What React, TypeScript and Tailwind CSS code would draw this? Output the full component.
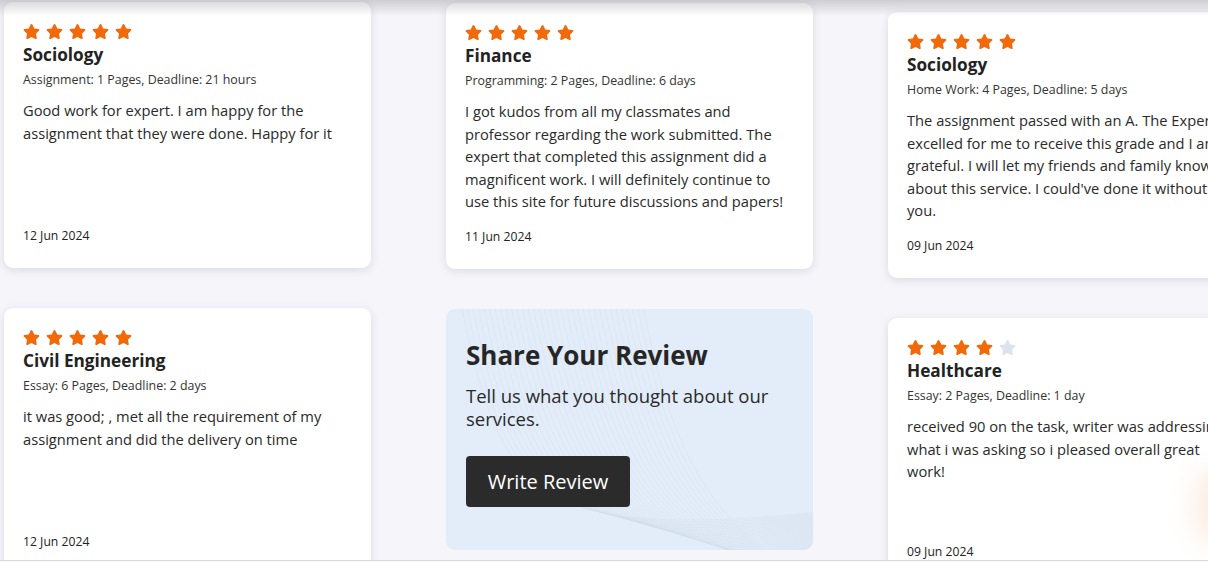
import React from "react";
import { FaStar } from "react-icons/fa";

type Review = {
  stars: number;
  title: string;
  meta: string;
  lines: string[];
  date: string;
};

const col1: Review[] = [
  {
    stars: 5,
    title: "Sociology",
    meta: "Assignment: 1 Pages, Deadline: 21 hours",
    lines: ["Good work for expert. I am happy for the", "assignment that they were done. Happy for it"],
    date: "12 Jun 2024",
  },
  {
    stars: 5,
    title: "Civil Engineering",
    meta: "Essay: 6 Pages, Deadline: 2 days",
    lines: ["it was good; , met all the requirement of my", "assignment and did the delivery on time"],
    date: "12 Jun 2024",
  },
];

const finance: Review = {
  stars: 5,
  title: "Finance",
  meta: "Programming: 2 Pages, Deadline: 6 days",
  lines: [
    "I got kudos from all my classmates and",
    "professor regarding the work submitted. The",
    "expert that completed this assignment did a",
    "magnificent work. I will definitely continue to",
    "use this site for future discussions and papers!",
  ],
  date: "11 Jun 2024",
};

const col3: Review[] = [
  {
    stars: 5,
    title: "Sociology",
    meta: "Home Work: 4 Pages, Deadline: 5 days",
    lines: [
      "The assignment passed with an A. The Expert",
      "excelled for me to receive this grade and I am",
      "grateful. I will let my friends and family know",
      "about this service. I could've done it without",
      "you.",
    ],
    date: "09 Jun 2024",
  },
  {
    stars: 4,
    title: "Healthcare",
    meta: "Essay: 2 Pages, Deadline: 1 day",
    lines: [
      "received 90 on the task, writer was addressing",
      "what i was asking so i pleased overall great",
      "work!",
    ],
    date: "09 Jun 2024",
  },
];

function Stars({ n }: { n: number }) {
  return (
    <div className="flex items-center gap-[6px] h-[17px]">
      {[0, 1, 2, 3, 4].map((i) => (
        <FaStar
          key={i}
          size={17}
          className={i < n ? "text-[#f2690a]" : "text-[#dde3ec]"}
        />
      ))}
    </div>
  );
}

function Card({ r }: { r: Review }) {
  return (
    <div className="w-[367px] h-[266px] shrink-0 bg-white rounded-[9px] shadow-[0_2px_8px_rgba(40,40,80,0.13)] px-[19px] pt-[21px] pb-[23px] flex flex-col">
      <Stars n={r.stars} />
      <div className="text-[17.2px] leading-[24px] font-bold text-[#222222] mt-[3px]">{r.title}</div>
      <div className="text-[12.4px] leading-[18px] text-[#333333] mt-[4px] whitespace-nowrap">{r.meta}</div>
      <div className="text-[14.7px] leading-[22.6px] text-[#2a2a2a] mt-[10px]">
        {r.lines.map((l, i) => (
          <div key={i} className="whitespace-nowrap">
            {l}
          </div>
        ))}
      </div>
      <div className="mt-auto text-[12.2px] leading-[18px] text-[#222222]">{r.date}</div>
    </div>
  );
}

function Waves() {
  const paths = Array.from({ length: 34 }, (_, i) => {
    const x = 15 + i * 5.5;
    const y = 205 + i * 1.1;
    return `M ${x} -5 C ${x + 20} 90, ${x + 40} 170, ${x + 110} ${y - 10} S 300 ${y + 5}, 372 ${y - 2}`;
  });
  return (
    <svg className="absolute inset-0 w-full h-full pointer-events-none" viewBox="0 0 367 241" preserveAspectRatio="none">
      {paths.map((d, i) => (
        <path key={i} d={d} fill="none" stroke="#c9d6e6" strokeWidth="0.6" opacity="0.45" />
      ))}
    </svg>
  );
}

function ShareCard() {
  return (
    <div className="relative w-[367px] h-[241px] shrink-0 rounded-[9px] bg-[#e3edf9] overflow-hidden px-[20px] pt-[30px]">
      <Waves />
      <div className="relative">
        <div className="text-[26px] leading-[32px] font-bold text-[#262626]">Share Your Review</div>
        <div className="text-[18.5px] leading-[23px] text-[#2a2a2a] mt-[13px]">
          <div className="whitespace-nowrap">Tell us what you thought about our</div>
          <div>services.</div>
        </div>
        <button className="mt-[26px] w-[164px] h-[51px] rounded-[4px] bg-[#2b2b2b] text-white text-[20px] flex items-center justify-center">
          Write Review
        </button>
      </div>
    </div>
  );
}

export default function App() {
  return (
    <div
      className="w-[1208px] h-[562px] flex flex-col overflow-hidden"
      style={{ fontFamily: '"Open Sans", "Noto Sans", sans-serif' }}
    >
      <div className="relative h-[560px] bg-[#f5f5fa] overflow-hidden">
        <div className="flex gap-[75px] pl-[4px]">
          <div className="flex flex-col gap-[40px] pt-[2px] shrink-0">
            <Card r={col1[0]} />
            <Card r={col1[1]} />
          </div>
          <div className="flex flex-col gap-[40px] pt-[3px] shrink-0">
            <Card r={finance} />
            <ShareCard />
          </div>
          <div className="flex flex-col gap-[40px] pt-[12px] shrink-0">
            <Card r={col3[0]} />
            <Card r={col3[1]} />
          </div>
        </div>
        <div className="pointer-events-none absolute inset-x-0 top-0 h-[16px] bg-gradient-to-b from-[rgba(0,0,0,0.16)] to-transparent" />
        <div className="pointer-events-none absolute right-[-34px] top-[468px] w-[48px] h-[76px] rounded-full bg-[#fbe2cf] opacity-60 blur-md" />
      </div>
      <div className="h-[1px] bg-[#d9d9dc]" />
      <div className="h-[1px] bg-[#fafafa]" />
    </div>
  );
}
